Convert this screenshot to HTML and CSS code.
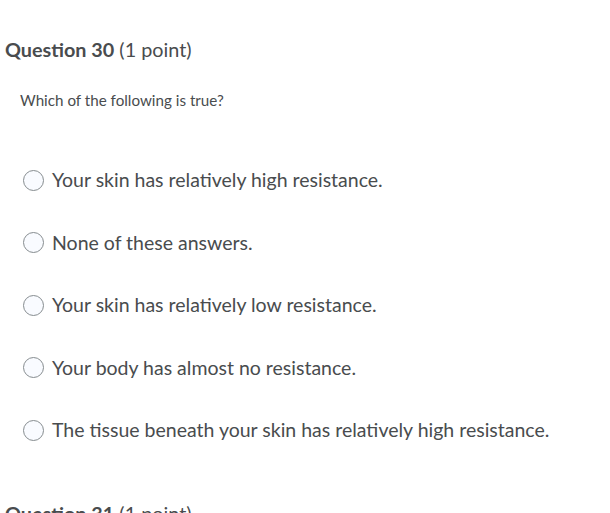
FILE: index.html
```html
<!DOCTYPE html>
<html>
<head>
<meta charset="utf-8">
<link rel="stylesheet" href="styles.css">
</head>
<body>
<div class="question">
  <h2 class="q-title"><strong>Question 30</strong> <span class="pts">(1 point)</span></h2>
  <p class="q-text">Which of the following is true?</p>
  <div class="options">
    <label class="opt"><span class="radio"></span><span>Your skin has relatively high resistance.</span></label>
    <label class="opt"><span class="radio"></span><span>None of these answers.</span></label>
    <label class="opt"><span class="radio"></span><span>Your skin has relatively low resistance.</span></label>
    <label class="opt"><span class="radio"></span><span>Your body has almost no resistance.</span></label>
    <label class="opt"><span class="radio"></span><span>The tissue beneath your skin has relatively high resistance.</span></label>
  </div>
</div>
<div class="question">
  <h2 class="q-title"><strong>Question 31</strong> <span class="pts">(1 point)</span></h2>
</div>
</body>
</html>
```
FILE: styles.css
```css
body {
  margin: 0;
  background: #fff;
  font-family: Lato, "Open Sans", sans-serif;
  color: #494c4e;
}
.question {
  padding: 0 5px;
}
.q-title {
  margin: 0;
  padding-top: 36px;
  font-size: 19.8px;
  line-height: 26px;
  font-weight: 400;
}
.q-title strong {
  font-weight: 700;
}
.q-text {
  margin: 0;
  padding: 28px 0 0 15px;
  font-size: 15.2px;
  line-height: 20px;
}
.options {
  display: flex;
  flex-direction: column;
  gap: 36.5px;
  padding: 57px 0 0 18px;
}
.opt {
  display: flex;
  align-items: center;
  gap: 8px;
  font-size: 19.5px;
  line-height: 26px;
}
.radio {
  width: 19px;
  height: 19px;
  border: 1px solid #868c8f;
  border-radius: 50%;
  background: #f9fbff;
  flex: none;
}
.question + .question .q-title {
  padding-top: 57px;
}
```
